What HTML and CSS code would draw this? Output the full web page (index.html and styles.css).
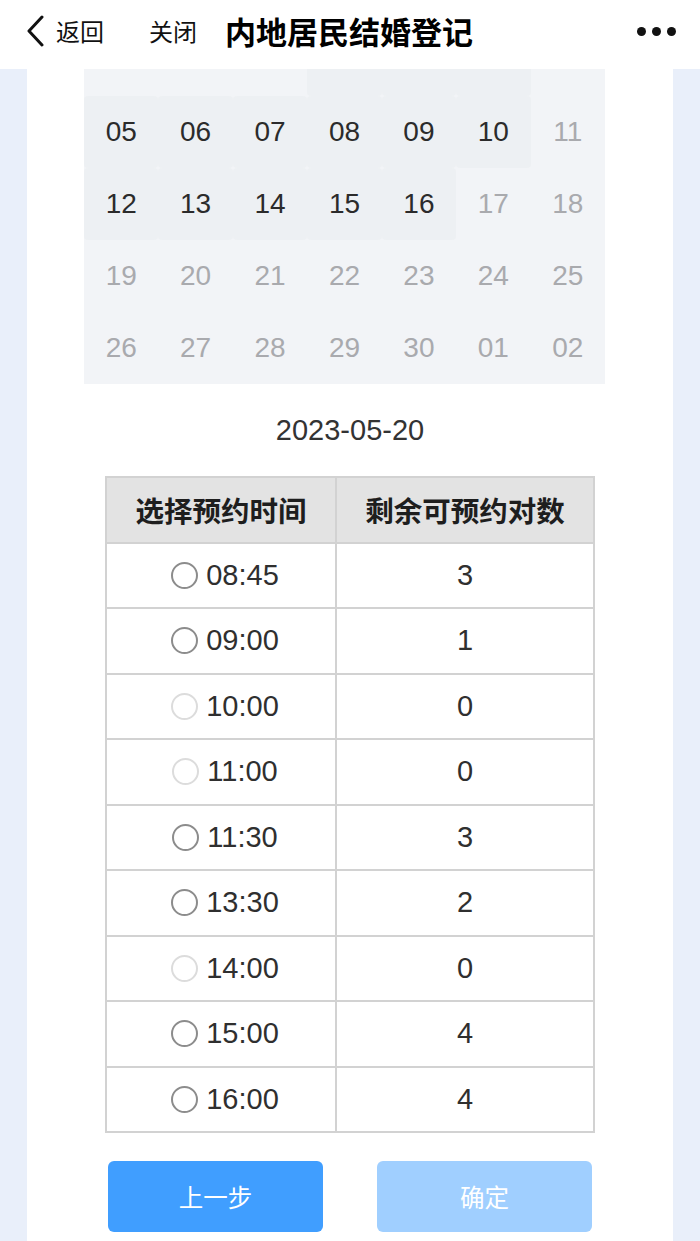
FILE: index.html
```html
<!DOCTYPE html>
<html lang="zh-CN">
<head>
<meta charset="utf-8">
<title>内地居民结婚登记</title>
<link rel="stylesheet" href="styles.css">
</head>
<body>
<header class="topbar">
  <div class="nav-left">
    <svg class="chev" width="20" height="32" viewBox="0 0 20 32"><path d="M16 2 L3 16 L16 30" fill="none" stroke="#111" stroke-width="3" stroke-linecap="round" stroke-linejoin="round"/></svg>
    <span class="nav-link">返回</span>
    <span class="nav-link close">关闭</span>
    <span class="title">内地居民结婚登记</span>
  </div>
  <div class="more"><i></i><i></i><i></i></div>
</header>

<main class="card">
  <div class="cal-view">
    <div class="calendar">
      <span class="day off">29</span><span class="day off">30</span><span class="day off">31</span><span class="day on">01</span><span class="day on">02</span><span class="day on">03</span><span class="day off">04</span>
      <span class="day on">05</span><span class="day on">06</span><span class="day on">07</span><span class="day on">08</span><span class="day on">09</span><span class="day on">10</span><span class="day off">11</span>
      <span class="day on">12</span><span class="day on">13</span><span class="day on">14</span><span class="day on">15</span><span class="day on">16</span><span class="day off">17</span><span class="day off">18</span>
      <span class="day off">19</span><span class="day off">20</span><span class="day off">21</span><span class="day off">22</span><span class="day off">23</span><span class="day off">24</span><span class="day off">25</span>
      <span class="day off">26</span><span class="day off">27</span><span class="day off">28</span><span class="day off">29</span><span class="day off">30</span><span class="day off">01</span><span class="day off">02</span>
    </div>
  </div>

  <div class="date">2023-05-20</div>

  <div class="slots">
    <div class="th">选择预约时间</div><div class="th">剩余可预约对数</div>
    <div class="td"><span class="radio"></span>08:45</div><div class="td">3</div>
    <div class="td"><span class="radio"></span>09:00</div><div class="td">1</div>
    <div class="td"><span class="radio dis"></span>10:00</div><div class="td">0</div>
    <div class="td"><span class="radio dis"></span>11:00</div><div class="td">0</div>
    <div class="td"><span class="radio"></span>11:30</div><div class="td">3</div>
    <div class="td"><span class="radio"></span>13:30</div><div class="td">2</div>
    <div class="td"><span class="radio dis"></span>14:00</div><div class="td">0</div>
    <div class="td"><span class="radio"></span>15:00</div><div class="td">4</div>
    <div class="td"><span class="radio"></span>16:00</div><div class="td">4</div>
  </div>

  <div class="actions">
    <button class="btn primary">上一步</button>
    <button class="btn disabled">确定</button>
  </div>
</main>
</body>
</html>
```
FILE: styles.css
```css
* { box-sizing: border-box; }
html, body { margin: 0; padding: 0; }
body {
  background: #e9effa;
  font-family: "Liberation Sans", "Noto Sans CJK SC", sans-serif;
  color: #333;
  height: 1241px;
  overflow: hidden;
}
.topbar {
  height: 69px;
  background: #fff;
  display: flex;
  align-items: center;
  justify-content: space-between;
  padding: 0 24px 8px 26px;
}
.nav-left { display: flex; align-items: center; }
.chev { display: block; margin-right: 10px; }
.nav-link {
  font-family: "Noto Sans CJK SC", sans-serif;
  font-size: 24px;
  color: #111;
}
.nav-link.close { margin-left: 45px; }
.title {
  font-family: "Noto Sans CJK SC", sans-serif;
  font-weight: 700;
  font-size: 31px;
  color: #000;
  margin-left: 28px;
}
.more { display: flex; gap: 6px; padding-top: 2px; }
.more i { width: 9px; height: 9px; border-radius: 50%; background: #111; display: block; }

.card {
  background: #fff;
  margin: 0 27px;
  min-height: 1172px;
}
.cal-view {
  width: 521px;
  margin-left: 57px;
  height: 315px;
  overflow: hidden;
}
.calendar {
  margin-top: -45px;
  display: grid;
  grid-template-columns: repeat(7, 1fr);
  grid-auto-rows: 72px;
  background: #f2f4f7;
}
.day {
  display: flex;
  align-items: center;
  justify-content: center;
  font-size: 28px;
  border-radius: 4px;
}
.day.on { color: #2b2b2b; background: #edf0f3; }
.day.off { color: #a9aaae; }

.date {
  text-align: center;
  font-size: 29px;
  line-height: 40px;
  margin-top: 26px;
  color: #333;
}
.slots {
  width: 490px;
  margin: 26px 0 0 78px;
  display: grid;
  grid-template-columns: 228px 256px;
  grid-auto-rows: 63.5px;
  gap: 2px;
  padding: 2px;
  background: #d2d2d2;
}
.th, .td {
  display: flex;
  align-items: center;
  justify-content: center;
  font-size: 29px;
}
.th {
  background: #e3e3e3;
  font-family: "Noto Sans CJK SC", sans-serif;
  font-weight: 700;
  font-size: 28.5px;
  color: #1e1e1e;
}
.td { background: #fff; color: #2f2f2f; }
.radio {
  width: 27px;
  height: 27px;
  border: 2px solid #8c8c8c;
  border-radius: 50%;
  margin-right: 8px;
  margin-left: 8px;
  flex: none;
}
.radio.dis { border-color: #dcdcdc; }

.actions {
  display: flex;
  justify-content: space-between;
  width: 484px;
  margin: 28px 0 0 81px;
}
.btn {
  width: 215px;
  height: 71px;
  border: none;
  border-radius: 6px;
  color: #fff;
  font-family: "Noto Sans CJK SC", sans-serif;
  font-size: 24.5px;
  padding: 0;
}
.btn.primary { background: #409eff; }
.btn.disabled { background: #a0cfff; }
```
